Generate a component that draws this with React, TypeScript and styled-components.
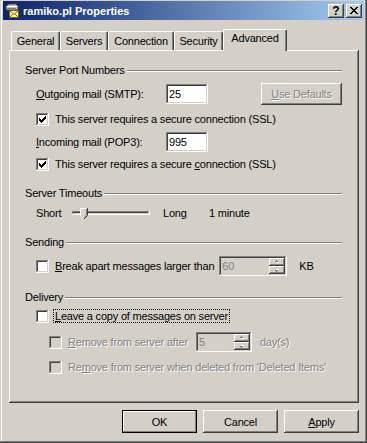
import React from "react";
import styled, { createGlobalStyle, css } from "styled-components";

const GlobalStyle = createGlobalStyle`
  html, body {
    margin: 0;
    padding: 0;
    background: #d4d0c8;
  }
  body {
    font-family: "Liberation Sans", Arial, sans-serif;
    font-size: 11px;
    letter-spacing: -0.2px;
    color: #000;
  }
`;

const raised = css`
  box-shadow: inset -1px -1px #404040, inset 1px 1px #fff, inset -2px -2px #808080,
    inset 2px 2px #d4d0c8;
`;

const sunken = css`
  box-shadow: inset -1px -1px #fff, inset 1px 1px #808080, inset -2px -2px #d4d0c8,
    inset 2px 2px #404040;
`;

const disabledText = css`
  color: #808080;
  text-shadow: 1px 1px #fff;
`;

const Window = styled.div`
  box-sizing: border-box;
  width: 367px;
  height: 443px;
  padding: 1px 3px 3px 3px;
  background: #d4d0c8;
  box-shadow: inset -1px -1px #404040, inset -2px -2px #808080, inset 1px 1px #d4d0c8,
    inset 2px 2px #fff;
  display: flex;
  flex-direction: column;
`;

const TitleBar = styled.div`
  height: 19px;
  display: flex;
  align-items: center;
  padding: 0 2px 0 1px;
  background: linear-gradient(to right, #0a246a, #a6caf0);
  color: #fff;
  font-weight: bold;
  letter-spacing: 0;
`;

const TitleText = styled.span`
  margin-left: 3px;
  white-space: nowrap;
`;

const CaptionButtons = styled.div`
  margin-left: auto;
  display: flex;
  gap: 2px;
`;

const CaptionButton = styled.div`
  width: 16px;
  height: 14px;
  background: #d4d0c8;
  ${raised};
  display: flex;
  align-items: center;
  justify-content: center;
  color: #000;
  font-size: 12px;
  font-weight: bold;
  line-height: 14px;
`;

const Body = styled.div`
  flex: 1;
  display: flex;
  flex-direction: column;
  padding: 9px 5px 0 6px;
`;

const TabStrip = styled.div`
  display: flex;
  align-items: flex-end;
  height: 21px;
  padding-left: 2px;
`;

const Tab = styled.div<{ $w: number; $active?: boolean }>`
  box-sizing: border-box;
  width: ${(p) => p.$w}px;
  height: ${(p) => (p.$active ? 22 : 19)}px;
  margin-bottom: ${(p) => (p.$active ? -1 : 0)}px;
  position: relative;
  z-index: ${(p) => (p.$active ? 1 : 0)};
  padding-top: ${(p) => (p.$active ? 1 : 2)}px;
  line-height: 15px;
  text-align: center;
  white-space: nowrap;
  background: #d4d0c8;
  border-top: 1px solid #fff;
  border-left: 1px solid #fff;
  border-right: 1px solid #404040;
  border-radius: 2px 2px 0 0;
  box-shadow: inset -1px 0 #808080;
`;

const Panel = styled.div`
  box-sizing: border-box;
  height: 353px;
  padding: 14px 17px 0 16px;
  box-shadow: inset -1px -1px #404040, inset 1px 1px #fff, inset -2px -2px #808080;
  display: flex;
  flex-direction: column;
`;

const GroupHeader = styled.div<{ $mt: number }>`
  display: flex;
  align-items: center;
  gap: 2px;
  height: 13px;
  line-height: 13px;
  margin-top: ${(p) => p.$mt}px;
  white-space: nowrap;
  &::after {
    content: "";
    flex: 1;
    height: 0;
    border-top: 1px solid #808080;
    border-bottom: 1px solid #fff;
  }
`;

const Row = styled.div<{ $mt: number; $h?: number; $indent?: number }>`
  display: flex;
  align-items: center;
  height: ${(p) => p.$h ?? 16}px;
  margin-top: ${(p) => p.$mt}px;
  padding-left: ${(p) => p.$indent ?? 11}px;
`;

const Text = styled.span<{ $w?: number; $ml?: number; $disabled?: boolean }>`
  white-space: nowrap;
  flex: none;
  width: ${(p) => (p.$w ? `${p.$w}px` : "auto")};
  margin-left: ${(p) => p.$ml ?? 0}px;
  ${(p) => p.$disabled && disabledText};
`;

const FocusText = styled.span`
  white-space: nowrap;
  margin-left: 4px;
  padding: 0 1px;
  line-height: 12px;
  border: 1px dotted #000;
`;

const Box = styled.span<{ $disabled?: boolean }>`
  box-sizing: border-box;
  flex: none;
  width: 13px;
  height: 13px;
  display: flex;
  align-items: center;
  justify-content: center;
  background: ${(p) => (p.$disabled ? "#d4d0c8" : "#fff")};
  ${sunken};
`;

const TextBox = styled.div<{ $w: number; $disabled?: boolean; $ml?: number }>`
  box-sizing: border-box;
  flex: none;
  width: ${(p) => p.$w}px;
  height: 20px;
  margin-left: ${(p) => p.$ml ?? 0}px;
  padding: 2px;
  display: flex;
  align-items: stretch;
  background: ${(p) => (p.$disabled ? "#d4d0c8" : "#fff")};
  color: ${(p) => (p.$disabled ? "#808080" : "#000")};
  ${sunken};
`;

const FieldValue = styled.span`
  flex: 1;
  padding-left: 1px;
  line-height: 16px;
`;

const Spinner = styled.div`
  width: 16px;
  display: flex;
  flex-direction: column;
`;

const SpinButton = styled.div`
  flex: 1;
  background: #d4d0c8;
  ${raised};
  display: flex;
  align-items: center;
  justify-content: center;
`;

const PushButton = styled.div<{ $w: number; $h?: number; $default?: boolean; $disabled?: boolean }>`
  box-sizing: border-box;
  flex: none;
  width: ${(p) => p.$w}px;
  height: ${(p) => p.$h ?? 23}px;
  display: flex;
  align-items: center;
  justify-content: center;
  background: #d4d0c8;
  ${(p) =>
    p.$default
      ? css`
          box-shadow: inset 0 0 0 1px #000, inset -2px -2px #808080, inset 2px 2px #fff;
        `
      : raised};
  ${(p) => p.$disabled && disabledText};
`;

const SliderBox = styled.div`
  position: relative;
  flex: none;
  width: 78px;
  height: 11px;
`;

const Track = styled.div`
  position: absolute;
  left: 0;
  right: 0;
  top: 3px;
  height: 4px;
  ${sunken};
`;

const Thumb = styled.svg`
  position: absolute;
  left: 8px;
  top: 0;
`;

const ButtonRow = styled.div`
  display: flex;
  justify-content: flex-end;
  gap: 6px;
  margin-top: 7px;
`;

const Check = () => (
  <svg width="7" height="7" viewBox="0 0 7 7">
    {[2, 3, 4, 3, 2, 1, 0].map((y, x) => (
      <rect key={x} x={x} y={y} width="1" height="3" fill="#000" />
    ))}
  </svg>
);

const Arrow = ({ down }: { down?: boolean }) => (
  <svg width="6" height="4" viewBox="0 0 6 4">
    <g transform={down ? "translate(0 4) scale(1 -1)" : undefined}>
      <path d="M3 1h1v1h1v1H2V2h1z" fill="#fff" />
      <path d="M2 0h1v1h1v1H1V1h1z" fill="#808080" />
    </g>
  </svg>
);

const AppIcon = () => (
  <svg width="16" height="16" viewBox="0 0 16 16">
    <path d="M2 3l3-2h7l2 2v4H2z" fill="#c0c0c0" stroke="#404040" strokeWidth="1" />
    <path d="M2.5 3.5h11" stroke="#fff" />
    <rect x="3" y="5" width="9" height="1" fill="#808080" />
    <rect x="5.5" y="7.5" width="9" height="7" fill="#fff8a8" stroke="#806000" />
    <path d="M5.5 7.5l4.5 4 4.5-4M5.5 14.5l3.2-3.2M14.5 14.5l-3.2-3.2" stroke="#806000" fill="none" />
  </svg>
);

const CloseGlyph = () => (
  <svg width="8" height="7" viewBox="0 0 8 7">
    <path
      d="M0 0h2v1H0zM6 0h2v1H6zM1 1h2v1H1zM5 1h2v1H5zM2 2h4v1H2zM3 3h2v1H3zM2 4h4v1H2zM1 5h2v1H1zM5 5h2v1H5zM0 6h2v1H0zM6 6h2v1H6z"
      fill="#000"
    />
  </svg>
);

type CheckProps = {
  checked?: boolean;
  disabled?: boolean;
  children: React.ReactNode;
};

const CheckItem = ({ checked, disabled, children }: CheckProps) => (
  <>
    <Box $disabled={disabled}>{checked && <Check />}</Box>
    <Text $ml={6} $disabled={disabled}>
      {children}
    </Text>
  </>
);

const SpinField = ({ value, w, ml }: { value: string; w: number; ml: number }) => (
  <TextBox $w={w} $ml={ml} $disabled>
    <FieldValue>{value}</FieldValue>
    <Spinner>
      <SpinButton>
        <Arrow />
      </SpinButton>
      <SpinButton>
        <Arrow down />
      </SpinButton>
    </Spinner>
  </TextBox>
);

const tabs = [
  { label: "General", w: 49 },
  { label: "Servers", w: 48 },
  { label: "Connection", w: 66 },
  { label: "Security", w: 49 },
  { label: "Advanced", w: 64, active: true },
];

export default function App() {
  return (
    <>
      <GlobalStyle />
      <Window>
        <TitleBar>
          <AppIcon />
          <TitleText>ramiko.pl Properties</TitleText>
          <CaptionButtons>
            <CaptionButton>?</CaptionButton>
            <CaptionButton>
              <CloseGlyph />
            </CaptionButton>
          </CaptionButtons>
        </TitleBar>
        <Body>
          <TabStrip>
            {tabs.map((t) => (
              <Tab key={t.label} $w={t.w} $active={t.active}>
                {t.label}
              </Tab>
            ))}
          </TabStrip>
          <Panel>
            <GroupHeader $mt={0}>Server Port Numbers</GroupHeader>
            <Row $mt={6} $h={22}>
              <Text $w={130}>
                <u>O</u>utgoing mail (SMTP):
              </Text>
              <TextBox $w={42}>
                <FieldValue>25</FieldValue>
              </TextBox>
              <PushButton $w={81} $h={22} $disabled style={{ marginLeft: "auto" }}>
                <u>U</u>se Defaults
              </PushButton>
            </Row>
            <Row $mt={6}>
              <CheckItem checked>This server requires a secure connection (SSL)</CheckItem>
            </Row>
            <Row $mt={4} $h={22}>
              <Text $w={130}>
                <u>I</u>ncoming mail (POP3):
              </Text>
              <TextBox $w={42}>
                <FieldValue>995</FieldValue>
              </TextBox>
            </Row>
            <Row $mt={3}>
              <CheckItem checked>
                This server requires a secure <u>c</u>onnection (SSL)
              </CheckItem>
            </Row>

            <GroupHeader $mt={15}>Server Timeouts</GroupHeader>
            <Row $mt={2} $h={22}>
              <Text $w={36}>Short</Text>
              <SliderBox>
                <Track />
                <Thumb width="8" height="11" viewBox="0 0 8 11">
                  <path d="M0 0h8v7l-4 4-4-4z" fill="#d4d0c8" />
                  <path d="M0.5 7.5V0.5H7" stroke="#fff" fill="none" />
                  <path d="M7.5 0v7.5L4 11" stroke="#404040" fill="none" />
                  <path d="M6.5 1v6.2L4 9.6" stroke="#808080" fill="none" />
                  <path d="M0.5 7.5L3.5 10.5" stroke="#fff" fill="none" />
                </Thumb>
              </SliderBox>
              <Text $w={46} $ml={13}>
                Long
              </Text>
              <Text>1 minute</Text>
            </Row>

            <GroupHeader $mt={12}>Sending</GroupHeader>
            <Row $mt={6} $h={22}>
              <Box />
              <Text $ml={6}>
                <u>B</u>reak apart messages larger than
              </Text>
              <SpinField value="60" w={68} ml={5} />
              <Text $ml={12}>KB</Text>
            </Row>

            <GroupHeader $mt={14}>Delivery</GroupHeader>
            <Row $mt={4}>
              <Box />
              <FocusText>
                <u>L</u>eave a copy of messages on server
              </FocusText>
            </Row>
            <Row $mt={7} $h={22} $indent={24}>
              <Box $disabled />
              <Text $ml={6} $disabled>
                <u>R</u>emove from server after
              </Text>
              <SpinField value="5" w={56} ml={8} />
              <Text $ml={8} $disabled>
                day(s)
              </Text>
            </Row>
            <Row $mt={6} $indent={24}>
              <CheckItem disabled>
                Re<u>m</u>ove from server when deleted from 'Deleted Items'
              </CheckItem>
            </Row>
          </Panel>
          <ButtonRow>
            <PushButton $w={75} $default>
              OK
            </PushButton>
            <PushButton $w={75}>Cancel</PushButton>
            <PushButton $w={75}>
              <u>A</u>pply
            </PushButton>
          </ButtonRow>
        </Body>
      </Window>
    </>
  );
}
